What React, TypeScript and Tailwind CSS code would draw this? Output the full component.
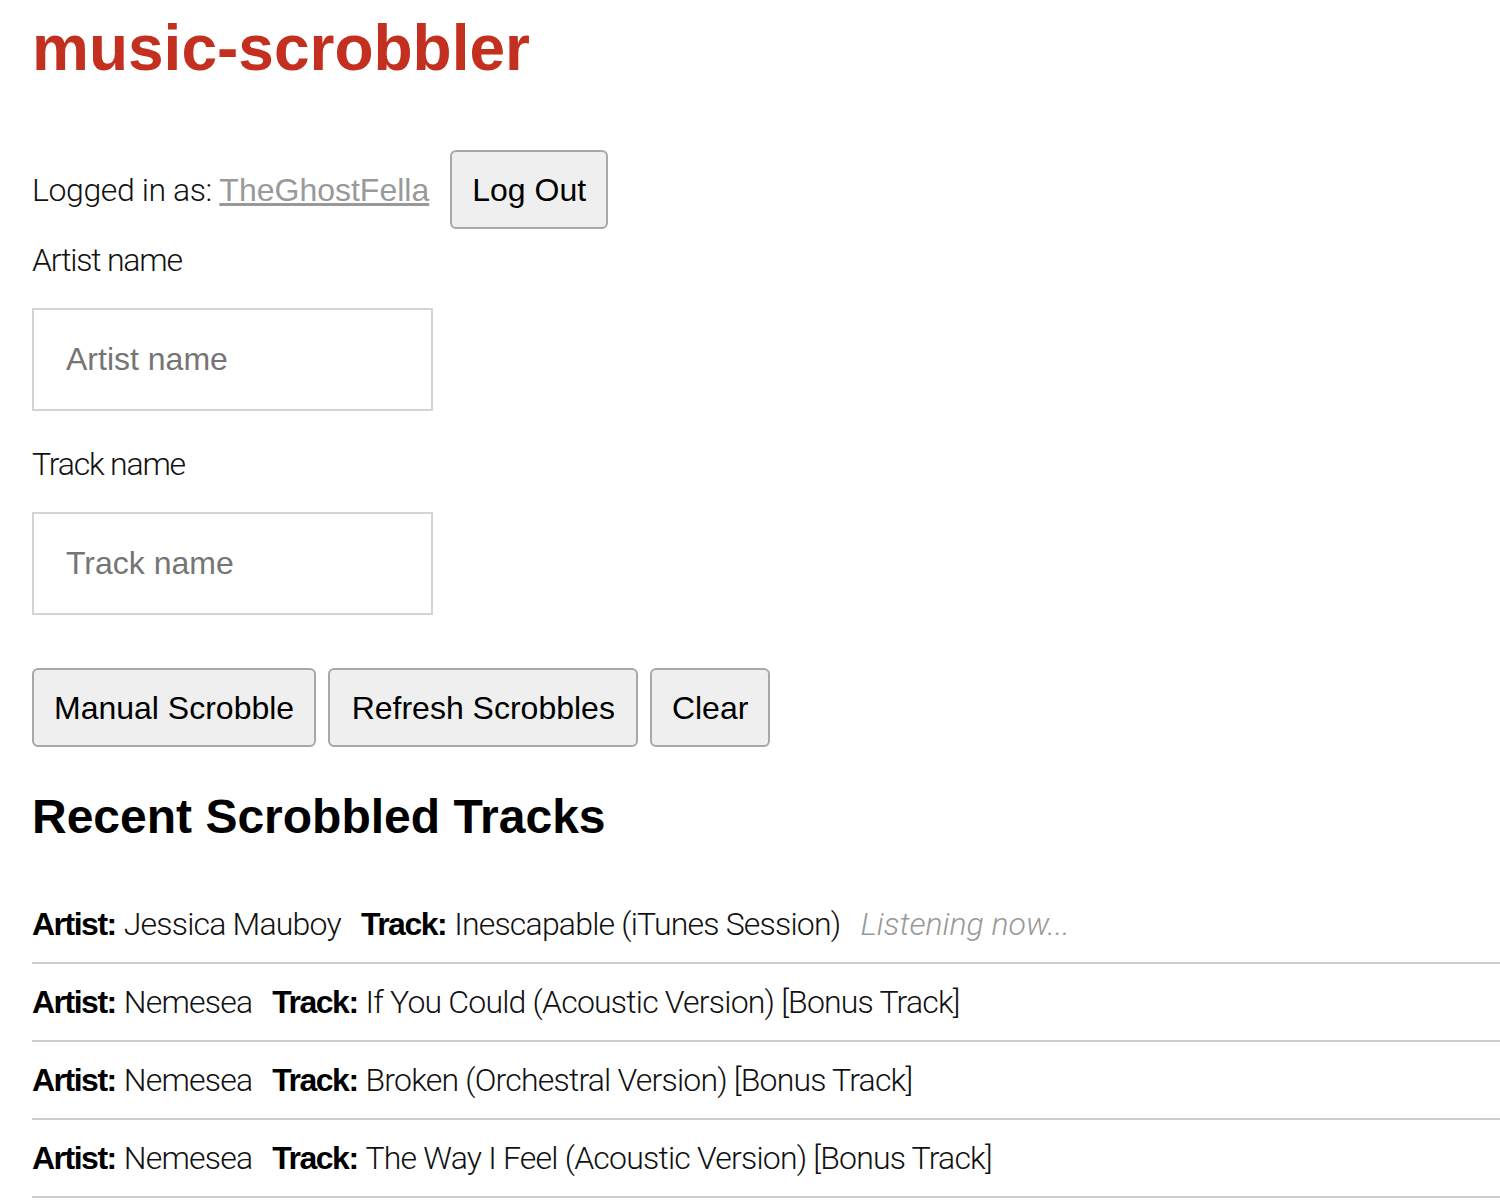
const tracks = [
  { artist: 'Jessica Mauboy', track: 'Inescapable (iTunes Session)', now: true },
  { artist: 'Nemesea', track: 'If You Could (Acoustic Version) [Bonus Track]', now: false },
  { artist: 'Nemesea', track: 'Broken (Orchestral Version) [Bonus Track]', now: false },
  { artist: 'Nemesea', track: 'The Way I Feel (Acoustic Version) [Bonus Track]', now: false },
];

const light = "font-['Roboto','Liberation_Sans',sans-serif] font-light tracking-[-0.8px]";
const sys = "font-['Liberation_Sans',Arial,sans-serif] tracking-normal";
const btn =
  "h-[79px] rounded-[6px] border-2 border-[#a8a8a8] bg-[#efefef] text-[32px] text-black font-['Liberation_Sans',Arial,sans-serif] tracking-normal";

export default function App() {
  return (
    <div className={`min-h-screen bg-white pl-8 text-[#111] ${light}`}>
      <h1 className={`pt-4 text-[64px] leading-[64px] font-bold text-[#c4301f] ${sys}`}>
        music-scrobbler
      </h1>

      {/* 로그인 정보 */}
      <div className="mt-[70px] flex items-center h-[79px] text-[32px]">
        <span className="tracking-[-0.4px]">Logged in as:&nbsp;</span>
        <a href="#" className={`text-[#999] underline ${sys}`}>TheGhostFella</a>
        <button className={`ml-[21px] px-5 ${btn}`}>Log Out</button>
      </div>

      <div className="mt-[13px] text-[32px] leading-[36px] tracking-[-1.2px]">Artist name</div>
      <input
        placeholder="Artist name"
        className={`mt-[30px] block w-[401px] h-[103px] border-2 border-[#d4d4d4] pl-8 text-[32px] placeholder:text-[#757575] outline-none ${sys}`}
      />

      <div className="mt-[35px] text-[32px] leading-[36px] tracking-[-1.2px]">Track name</div>
      <input
        placeholder="Track name"
        className={`mt-[30px] block w-[401px] h-[103px] border-2 border-[#d4d4d4] pl-8 text-[32px] placeholder:text-[#757575] outline-none ${sys}`}
      />

      <div className="mt-[53px] flex gap-3">
        <button className={`px-5 ${btn}`}>Manual Scrobble</button>
        <button className={`px-[21.5px] ${btn}`}>Refresh Scrobbles</button>
        <button className={`px-[19.5px] ${btn}`}>Clear</button>
      </div>

      <h2 className={`mt-[46px] text-[48px] leading-[48px] font-bold text-black ${sys}`}>
        Recent Scrobbled Tracks
      </h2>

      <ul className="mt-[45px]">
        {tracks.map((t, i) => (
          <li key={i} className="h-[78px] flex items-center border-b-2 border-[#cccccc] text-[32px] text-[#111]">
            <b className="font-bold text-black tracking-[-1.5px] font-['Liberation_Sans',Arial,sans-serif]">Artist:</b>
            <span className="ml-2">{t.artist}</span>
            <b className="ml-5 font-bold text-black tracking-[-1.5px] font-['Liberation_Sans',Arial,sans-serif]">Track:</b>
            <span className="ml-2">{t.track}</span>
            {t.now && <i className="ml-5 text-[#999] tracking-normal">Listening now...</i>}
          </li>
        ))}
      </ul>
    </div>
  );
}
